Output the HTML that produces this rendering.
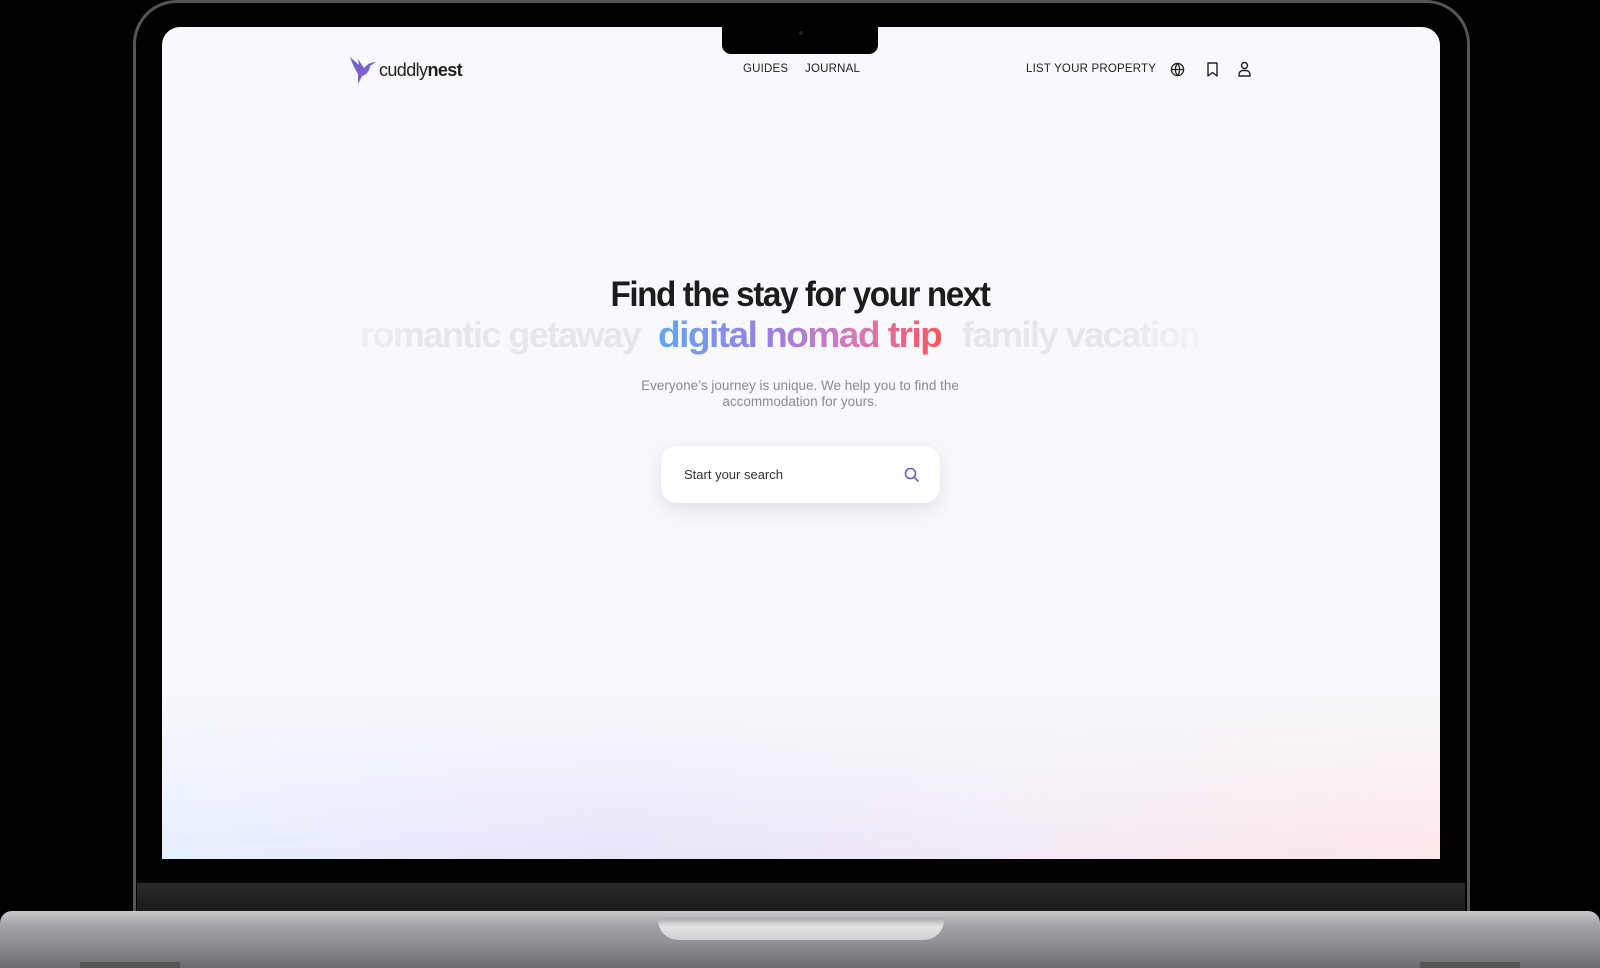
<!DOCTYPE html>
<html><head><meta charset="utf-8"><style>
*{margin:0;padding:0;box-sizing:border-box}
body{width:1600px;height:968px;background:#000;position:relative;overflow:hidden;font-family:"Liberation Sans",sans-serif}
.lid{position:absolute;left:133px;top:0;width:1337px;height:925px;border-radius:44px 44px 0 0;background:#000;border:3px solid #555;border-bottom:none}
.chin{position:absolute;left:137px;top:883px;width:1328px;height:38px;background:linear-gradient(#2a2a2a,#161616)}
.base{position:absolute;left:0;top:911px;width:1600px;height:57px;background:linear-gradient(#c9c9cc 0%,#a3a3a7 25%,#8e8e92 60%,#6b6b6f 100%);border-radius:12px 12px 0 0}
.hinge{position:absolute;left:658px;top:918px;width:286px;height:22px;background:linear-gradient(#aaa,#e3e3e6 40%,#cfcfd2);border-radius:0 0 20px 20px}
.foot{position:absolute;top:962px;width:100px;height:6px;background:#555}
.screen{position:absolute;left:162px;top:27px;width:1278px;height:832px;border-radius:18px 18px 0 0;overflow:hidden;background:#f8f9fc}
.glow{position:absolute;left:0;right:0;bottom:0;height:170px;background:linear-gradient(90deg,#e6effd 0%,#e9e5f8 35%,#f1e9f5 65%,#fbe7ea 100%);-webkit-mask:linear-gradient(transparent,#000);mask:linear-gradient(transparent,#000)}
.notch{position:absolute;left:722px;top:27px;width:156px;height:27px;background:#000;border-radius:0 0 9px 9px}
.t{position:absolute;white-space:nowrap}
.nav{font-size:11.5px;color:#222;letter-spacing:.2px;top:63px}
h1{position:absolute;left:0;width:1600px;text-align:center;top:275px;font-size:35px;font-weight:bold;color:#1c1c1e;letter-spacing:-1.5px;transform:scaleX(.95)}
.w{position:absolute;top:314px;font-size:36px;font-weight:bold;letter-spacing:-1.5px;white-space:nowrap}
.g{background:linear-gradient(90deg,#64a6f5,#9a7ee0 40%,#d879b8 70%,#f5575e);-webkit-background-clip:text;color:transparent}
.f{color:#e3e4e8}
.sub{position:absolute;left:0;width:1600px;text-align:center;top:378px;font-size:13.5px;line-height:16px;color:#8a8a90}
.search{position:absolute;left:661px;top:446px;width:279px;height:57px;background:#fff;border-radius:16px;box-shadow:0 6px 18px rgba(40,40,80,.12)}
</style></head><body>
<div class="lid"></div>
<div class="screen"><div class="glow"></div></div>
<div class="notch"></div>
<div style="position:absolute;left:799px;top:31px;width:4px;height:4px;border-radius:2px;background:#222"></div>
<div class="chin"></div>
<div class="base"></div>
<div class="hinge"></div>
<div class="foot" style="left:80px"></div><div class="foot" style="left:1420px"></div>

<svg style="position:absolute;left:349px;top:56px" width="30" height="29" viewBox="0 0 30 29"><path d="M1 1 L10 9 L9 3 L15 12 Q20 6 27 6 L21 10 Q20 18 13 20 L9 28 L9 18 Q4 10 1 1Z" fill="#7a5fd0"/></svg>
<div class="t" style="left:379px;top:60px;font-size:18px;color:#222;letter-spacing:-.6px">cuddly<b>nest</b></div>

<div class="t nav" style="left:743px">GUIDES</div>
<div class="t nav" style="left:805px">JOURNAL</div>
<div class="t nav" style="left:1026px">LIST YOUR PROPERTY</div>
<svg style="position:absolute;left:1170px;top:62px" width="15" height="15" viewBox="0 0 16 16" fill="none" stroke="#222" stroke-width="1.4"><circle cx="8" cy="8" r="6.5"/><path d="M1.5 8h13M8 1.5c-3 3.5-3 9.5 0 13M8 1.5c3 3.5 3 9.5 0 13"/></svg>
<svg style="position:absolute;left:1206px;top:62px" width="13" height="15" viewBox="0 0 13 15" fill="none" stroke="#222" stroke-width="1.4"><path d="M2 1h9v13l-4.5-3.5L2 14z" stroke-linejoin="round"/></svg>
<svg style="position:absolute;left:1238px;top:61px" width="13" height="16" viewBox="0 0 13 16" fill="none" stroke="#222" stroke-width="1.4"><circle cx="6.5" cy="4.5" r="3"/><path d="M1 15v-1.5a4 4 0 0 1 4-4h3a4 4 0 0 1 4 4V15z"/></svg>

<h1>Find the stay for your next</h1>
<div class="w f" style="right:960px;opacity:.85">romantic getaway</div>
<div class="w g" style="left:658px;transform-origin:left;transform:scaleX(1.03)">digital nomad trip</div>
<div class="w f" style="left:962px;opacity:.85">family vacation</div>
<div style="position:absolute;left:162px;top:310px;width:260px;height:50px;background:linear-gradient(90deg,#f8f9fc 55%,rgba(248,249,252,0))"></div>
<div style="position:absolute;left:1110px;top:310px;width:330px;height:50px;background:linear-gradient(270deg,#f8f9fc 60%,rgba(248,249,252,0))"></div>
<div class="sub">Everyone’s journey is unique. We help you to find the<br>accommodation for yours.</div>
<div class="search"></div>
<div class="t" style="left:684px;top:467px;font-size:13px;color:#333">Start your search</div>
<svg style="position:absolute;left:904px;top:467px" width="15" height="15" viewBox="0 0 15 15" fill="none" stroke="#6b5bc4" stroke-width="1.6"><circle cx="6.5" cy="6.5" r="5"/><path d="M10.2 10.2L14 14" stroke-linecap="round"/></svg>
</body></html>
